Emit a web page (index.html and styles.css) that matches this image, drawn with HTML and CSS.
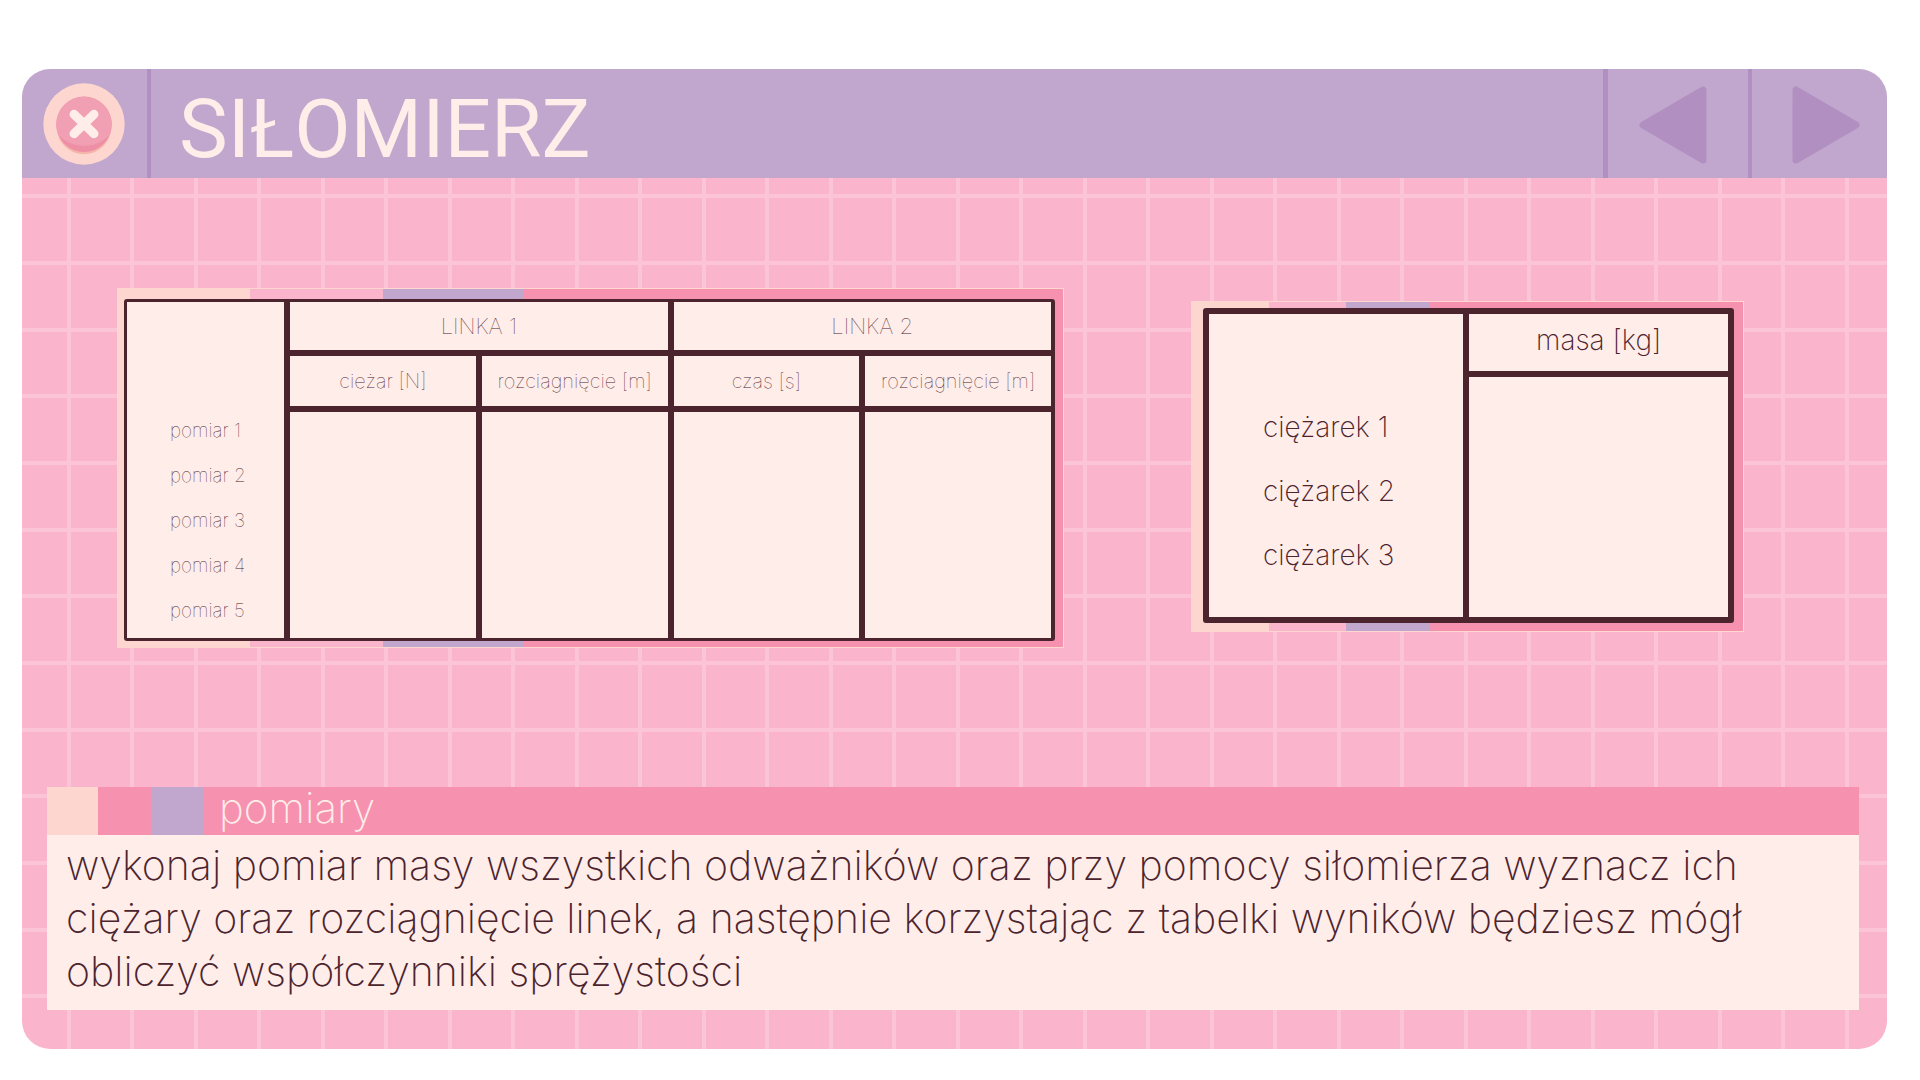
FILE: index.html
```html
<!DOCTYPE html>
<html lang="pl">
<head>
<meta charset="utf-8">
<meta name="viewport" content="width=device-width, initial-scale=1">
<title>Siłomierz</title>
<link rel="stylesheet" href="styles.css">
</head>
<body>
<div class="window">
  <header class="bar">
    <button class="bar-button close" type="button" aria-label="Zamknij">
      <svg width="82" height="82" viewBox="0 0 82 82" aria-hidden="true">
        <circle cx="41" cy="41" r="40.7" fill="#fdd7cf"/>
        <circle cx="41" cy="44" r="27.2" fill="#f5b5aa"/>
        <circle cx="41" cy="41.3" r="27.7" fill="#ee8fa5"/>
        <path d="M15.500 52.200a27.700 27.700 0 1 1 51 0a35.500 35.500 0 0 1-51 0z" fill="#f19fb2"/>
        <path d="M31 31.300l20 19.400M51 31.300l-20 19.400" fill="none" stroke="#ffede9" stroke-width="9" stroke-linecap="round"/>
      </svg>
    </button>
    <h1 class="title">SIŁOMIERZ</h1>
    <nav class="pager" aria-label="Nawigacja">
      <button class="bar-button prev" type="button" aria-label="Poprzedni">
        <svg width="68" height="78" viewBox="0 0 68 78" aria-hidden="true">
          <path d="M64 4v70L4 39z" fill="#b18fc1" stroke="#b18fc1" stroke-width="7" stroke-linejoin="round"/>
        </svg>
      </button>
      <button class="bar-button next" type="button" aria-label="Następny">
        <svg width="68" height="78" viewBox="0 0 68 78" aria-hidden="true">
          <path d="M4 4v70L64 39z" fill="#b18fc1" stroke="#b18fc1" stroke-width="7" stroke-linejoin="round"/>
        </svg>
      </button>
    </nav>
  </header>

  <main class="board">
    <div class="tables">
      <section class="frame frame-lines">
        <table class="sheet sheet-lines">
          <colgroup><col class="col-label"><col><col><col><col></colgroup>
          <thead>
            <tr><td rowspan="2"></td><th colspan="2" scope="colgroup">LINKA 1</th><th class="line-two" colspan="2" scope="colgroup">LINKA 2</th></tr>
            <tr class="units"><th scope="col">cieżar [N]</th><th scope="col">rozciagnięcie [m]</th><th scope="col">czas [s]</th><th scope="col">rozciagnięcie [m]</th></tr>
          </thead>
          <tbody>
            <tr><th scope="row">pomiar 1</th><td></td><td></td><td></td><td></td></tr>
            <tr><th scope="row">pomiar 2</th><td></td><td></td><td></td><td></td></tr>
            <tr><th scope="row">pomiar 3</th><td></td><td></td><td></td><td></td></tr>
            <tr><th scope="row">pomiar 4</th><td></td><td></td><td></td><td></td></tr>
            <tr><th scope="row">pomiar 5</th><td></td><td></td><td></td><td></td></tr>
          </tbody>
        </table>
      </section>
      <section class="frame frame-weights">
        <table class="sheet sheet-weights">
          <colgroup><col class="col-label"><col></colgroup>
          <thead>
            <tr><td></td><th scope="col">masa [kg]</th></tr>
          </thead>
          <tbody>
            <tr><th scope="row">ciężarek 1</th><td></td></tr>
            <tr><th scope="row">ciężarek 2</th><td></td></tr>
            <tr><th scope="row">ciężarek 3</th><td></td></tr>
          </tbody>
        </table>
      </section>
    </div>

    <section class="note">
      <h2 class="note-title">pomiary</h2>
      <p class="note-text">wykonaj pomiar masy wszystkich odważników oraz przy pomocy siłomierza wyznacz ich ciężary oraz rozciągnięcie linek, a następnie korzystając z tabelki wyników będziesz mógł obliczyć współczynniki sprężystości</p>
    </section>
  </main>
</div>
</body>
</html>
```
FILE: styles.css
```css
:root {
  --lilac: #c1a7ce;
  --violet: #b18fc1;
  --pink: #fab4cc;
  --pink-line: #fbc5d7;
  --hot: #f791b0;
  --peach: #fdd7cf;
  --paper: #ffede9;
  --ink: #4c242e;
}

* {
  box-sizing: border-box;
}

body {
  margin: 0;
  padding: 69px 33px 31px 22px;
  background: #fff;
  color: var(--ink);
  font-family: Inter, "Noto Sans", sans-serif;
  font-weight: 200;
}

.window {
  border-radius: 28px;
  overflow: hidden;
}

/* Title bar */
.bar {
  display: flex;
  height: 109px;
  background: var(--lilac);
}

.bar-button {
  display: flex;
  align-items: center;
  justify-content: center;
  padding: 0;
  border: 0 solid var(--violet);
  background: none;
  cursor: pointer;
}

.close {
  width: 129px;
  border-right-width: 4px;
  padding: 1px 2px 0 0;
}

.title {
  flex: 1;
  margin: 0;
  padding: 6px 0 0 28px;
  color: var(--paper);
  font-family: Roboto, sans-serif;
  font-size: 82px;
  font-weight: 450;
  line-height: 109px;
}

.pager {
  display: flex;
}

.prev {
  width: 145px;
  border-left-width: 5px;
  padding: 2px 11px 0 0;
}

.next {
  width: 139px;
  border-left-width: 4px;
  padding: 2px 0 0 13px;
}

/* Checked paper: the tile is 127 x 200 and holds two columns and three rows */
.board {
  padding: 110px 28px 39px 25px;
  background-color: var(--pink);
  background-image:
    linear-gradient(90deg, var(--pink-line) 4px, transparent 4px 63px, var(--pink-line) 63px 67px, transparent 67px),
    linear-gradient(var(--pink-line) 4px, transparent 4px 67px, var(--pink-line) 67px 71px, transparent 71px 134px, var(--pink-line) 134px 138px, transparent 138px);
  background-size: 127px 200px;
  background-position: 45px 16px;
}

.tables {
  display: grid;
  grid-template-columns: 947fr 553fr;
  align-items: center;
  gap: 127px;
  padding: 0 115px 0 70px;
}

.frame {
  border: 1px solid var(--peach);
  background: linear-gradient(90deg, var(--peach) 14%, var(--pink) 14% 28%, var(--lilac) 28% 43%, var(--hot) 43%);
}

.frame-lines {
  padding: 10px 8px 6px 6px;
}

.frame-weights {
  margin-bottom: 3px;
  padding: 6px 9px 8px 11px;
}

.sheet {
  width: 100%;
  border: 3px solid var(--ink);
  border-radius: 3px;
  border-spacing: 0;
  table-layout: fixed;
  background: var(--paper);
}

.sheet th,
.sheet td {
  padding: 0;
  font-weight: inherit;
}

.sheet td + td,
.sheet td + th,
.sheet th + th,
.sheet th + td,
.sheet thead th {
  border-left: 6px solid var(--ink);
}

.sheet thead th {
  border-bottom: 6px solid var(--ink);
}

.sheet tbody th {
  text-align: left;
  vertical-align: top;
}

.sheet-lines {
  border-right-width: 4px;
  font-size: 22px;
  font-weight: 100;
}

.sheet-lines .col-label {
  width: 17%;
}

.sheet-lines thead tr {
  height: 54px;
}

.sheet-lines thead .line-two {
  padding-left: 20px;
}

.sheet-lines thead .units {
  height: 56px;
  font-size: 20px;
}

.sheet-lines tbody tr {
  height: 45px;
}

.sheet-lines tbody tr:last-child {
  height: 46px;
}

.sheet-lines tbody th {
  padding-left: 43px;
  font-size: 19px;
  line-height: 38px;
}

.sheet-weights {
  border-width: 6px;
  font-size: 28px;
  font-weight: 150;
}

.sheet-weights .col-label {
  width: 49%;
}

.sheet-weights thead tr {
  height: 63px;
}

.sheet-weights thead th {
  padding-bottom: 6px;
}

.sheet-weights tbody tr {
  height: 64px;
}

.sheet-weights tbody tr:first-child {
  height: 82px;
}

.sheet-weights tbody tr:first-child th {
  padding-top: 18px;
}

.sheet-weights tbody tr:last-child {
  height: 94px;
}

.sheet-weights tbody th {
  padding-left: 54px;
  line-height: 64px;
}

/* Instruction box */
.note {
  margin-top: 139px;
  background: var(--paper);
}

.note-title {
  margin: 0;
  padding: 0 0 6px 172px;
  background: linear-gradient(90deg, var(--peach) 51px, var(--hot) 51px 104px, var(--lilac) 104px 157px, var(--hot) 157px);
  color: var(--paper);
  font-size: 42px;
  font-weight: 150;
  line-height: 42px;
}

.note-text {
  margin: 0;
  padding: 4px 18px 12px 19px;
  font-size: 41px;
  line-height: 53px;
}
```
